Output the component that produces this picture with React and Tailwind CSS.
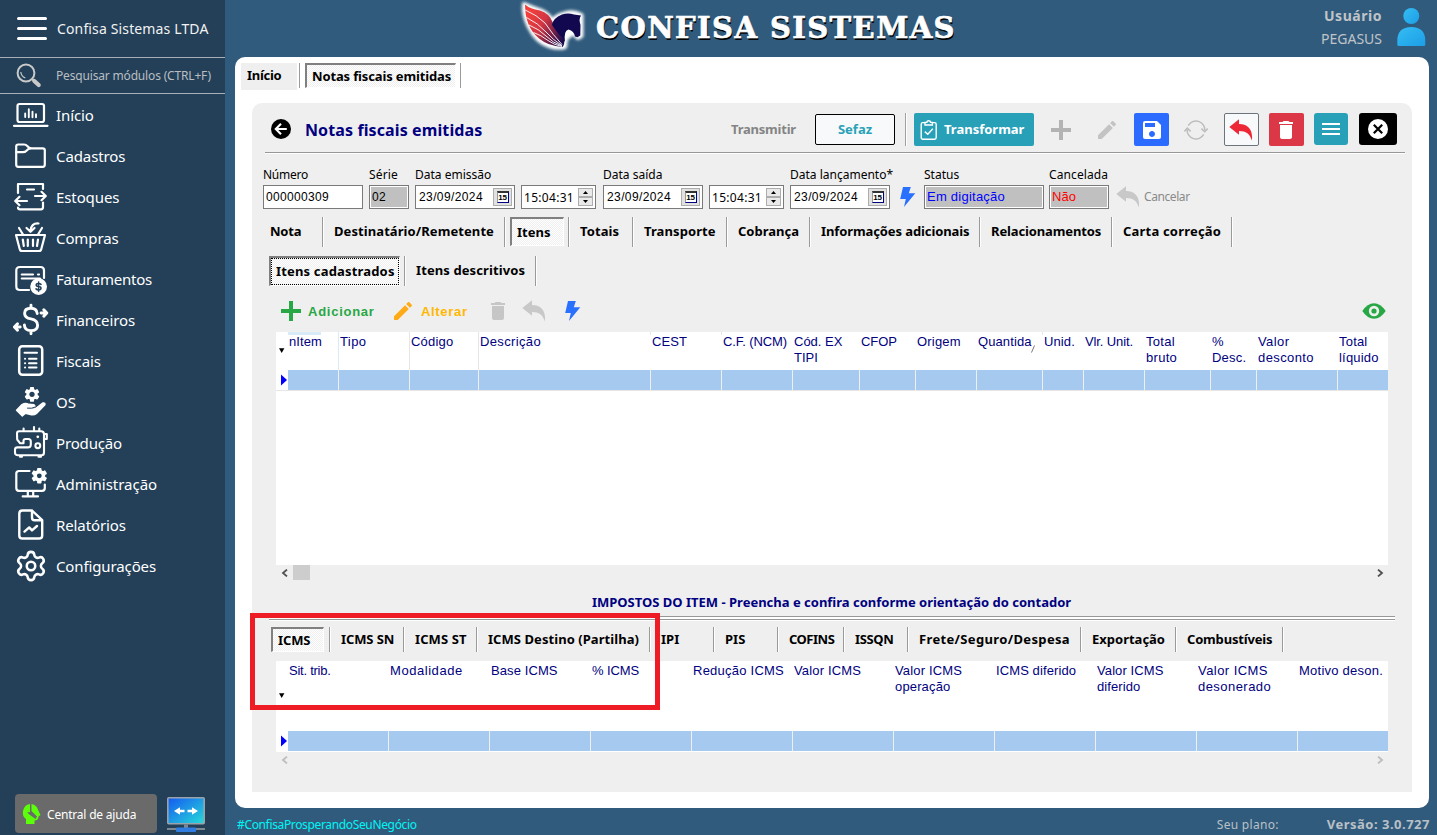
import React from "react";
import { Settings } from "lucide-react";
import { MdDelete, MdSave, MdEdit } from "react-icons/md";

const noto = "font-['Noto_Sans','Open_Sans',sans-serif]";
const arial = "font-['Liberation_Sans',Arial,sans-serif]";

/* ---------- sidebar icons ---------- */

function Icon({ children, w = 2.2 }) {
  return (
    <svg width="36" height="36" viewBox="0 0 36 36" fill="none" stroke="#fff" strokeWidth={w} strokeLinecap="round" strokeLinejoin="round">
      {children}
    </svg>
  );
}

function Cog({ cx, cy, r, hole }) {
  return (
    <g transform={`translate(${cx} ${cy})`} stroke="none" fill="#fff">
      {[0, 60, 120].map((a) => (
        <rect key={a} x={-r * 0.28} y={-r} width={r * 0.56} height={r * 2} rx="0.8" transform={`rotate(${a})`} />
      ))}
      <circle r={r * 0.76} />
      <circle r={hole} fill="#234058" />
    </g>
  );
}

const icons = {
  inicio: (
    <Icon>
      <rect x="4.5" y="7" width="26.5" height="18" rx="2" />
      <path d="M1 28.8H34.5" />
      <path d="M12.2 16.5V20M15.8 12.3V20.3M19.5 14.8V20.3M23 17.3V20.3" strokeWidth="1.9" />
    </Icon>
  ),
  cadastros: (
    <Icon>
      <path d="M3.2 8.5Q3.2 6.5 5.2 6.5H11Q13 6.5 14.5 8.2Q16 10 18 10.3H29.7Q31.8 10.3 31.8 12.3V26.5Q31.8 28.8 29.7 28.8H5.2Q3.2 28.8 3.2 26.5Z" />
      <path d="M3.5 14.2H10Q12 14.2 13.4 12.7Q15.5 10.3 17.5 10.3" />
    </Icon>
  ),
  estoques: (
    <Icon>
      <path d="M5 14V5H30V10M30 23.5V28Q30 30.3 28 30.3H7Q5 30.3 5 28.5" />
      <path d="M14 10.5H21" />
      <path d="M22 17H32.5M28.5 12.8L32.8 17L28.5 21.2M14 22H2.5M6.5 17.8L2.2 22L6.5 26.2" />
    </Icon>
  ),
  compras: (
    <Icon>
      <path d="M3 15H32L28.3 29Q27.9 31 26 31H9Q7.1 31 6.7 29Z" />
      <path d="M6 8L10 14.5M29 8L25 14.5M25.5 3.5Q18 3 17.5 11M13.5 8L17.5 11.8L21.5 8" />
      <path d="M9.8 19.5L10.8 26M14.8 19.5V26M20 19.5V26M25 19.5L24 26" />
    </Icon>
  ),
  faturamentos: (
    <Icon>
      <path d="M16 29H7Q3.3 29 3.3 25.5V9.5Q3.3 6 7 6H27.5Q31 6 31 9.5V17" />
      <path d="M8.8 13.5H20M25 13.5H26M8.8 17.5H27" />
      <circle cx="25.6" cy="25.6" r="7.3" fill="#fff" />
      <path d="M28 23.4Q27 22.4 25.5 22.4Q23.2 22.4 23.2 24Q23.2 25.4 25.6 25.6Q28 25.9 28 27.3Q28 28.9 25.6 28.9Q24 28.9 23 27.9M25.6 21V30.2" stroke="#234058" strokeWidth="1.5" />
    </Icon>
  ),
  financeiros: (
    <Icon w={2.9}>
      <path d="M24.2 11.5Q23.8 6.2 18 6.2Q11.6 6.2 11.6 11.2Q11.6 15.8 18 16.9Q24.6 18.2 24.6 23.2Q24.6 28.6 18 28.6Q11.6 28.6 11.4 23M18 3.3V6M18 29V31.7" />
      <path d="M28 11H33.5M30.8 7.8L33.8 11L30.8 14.2M7.2 25H1.7M4.5 21.8L1.4 25L4.5 28.2" />
    </Icon>
  ),
  fiscais: (
    <Icon>
      <rect x="6.2" y="3.3" width="23" height="28.5" rx="3.2" strokeWidth="2.5" />
      <path d="M11.5 9.8H24M16 15.8H23.5M16 20.2H23.5M16 24.6H23.5M12 15.8H12.1M12 20.2H12.1M12 24.6H12.1" strokeWidth="2" />
    </Icon>
  ),
  os: (
    <Icon>
      <Cog cx={19} cy={10.3} r={7.4} hole={2.6} />
      <path d="M3.5 26.3L9 20.6Q12.5 18.6 15.5 20.3L21 20.7Q22.8 22 21 23.4L15.5 24.2Q19.5 26.2 23.5 23.8L30 18.9Q32.5 18.6 31.9 20.8L23.5 29.4Q21.5 31 18.5 30.7L12.5 29.3L9.3 31.9Z" fill="#fff" strokeWidth="1.4" />
      <path d="M14.5 24.2Q19 24.8 22 23.2" stroke="#234058" strokeWidth="1" />
    </Icon>
  ),
  producao: (
    <Icon w={2.1}>
      <path d="M4 8.5Q4 6.3 6.2 6.3H28Q31 6.3 31 9.3V27.5Q31 30.3 28.5 30.3H5Q2 30.3 2 27.5V24.8Q2 22.4 4.6 22.4H15Q17.8 22.4 17.8 19.5V16.5Q17.8 14 15.3 14H12.5Q10.5 14 10.5 16V18.3L7.2 18.3L4.2 14.5Z" />
      <path d="M10.6 3.5V6M21 2V6M26.3 3.5V6M31.5 9H33.8V14H31.5M7 31.8H9M25.5 31.8H28" />
      <circle cx="24.8" cy="20.7" r="2.4" />
      <circle cx="24.8" cy="11.8" r="1.4" fill="#fff" stroke="none" />
    </Icon>
  ),
  administracao: (
    <Icon>
      <path d="M16.5 5H6Q3.3 5 3.3 7.6V22Q3.3 24.8 6 24.8H29Q31.8 24.8 31.8 22V18.5M14.8 25V30M20.2 25V30M9.7 30.4H25" />
      <Cog cx={26.3} cy={9.8} r={7.8} hole={2.4} />
    </Icon>
  ),
  relatorios: (
    <Icon w={2.4}>
      <path d="M19 3.5H9.5Q6.3 3.5 6.3 6.6V28.4Q6.3 31.5 9.5 31.5H26Q29.2 31.5 29.2 28.4V13.2L19 3.5V10.5Q19 13.2 21.6 13.2H29" />
      <path d="M11.5 24.6L16.2 20.4L19 23.4L24 19" />
    </Icon>
  ),
  configuracoes: <Settings size={34} color="#fff" strokeWidth={1.8} />,
};

const menu = [
  ["Início", "inicio", "tracking-[-0.1px]"],
  ["Cadastros", "cadastros", "tracking-[-0.1px]"],
  ["Estoques", "estoques", "tracking-[-0.1px]"],
  ["Compras", "compras", "tracking-[-0.1px]"],
  ["Faturamentos", "faturamentos", "tracking-[-0.22px]"],
  ["Financeiros", "financeiros", "tracking-[-0.12px]"],
  ["Fiscais", "fiscais", "tracking-[-0.1px]"],
  ["OS", "os", "tracking-[0px]"],
  ["Produção", "producao", "tracking-[-0.15px]"],
  ["Administração", "administracao", "tracking-[-0.03px]"],
  ["Relatórios", "relatorios", "tracking-[-0.1px]"],
  ["Configurações", "configuracoes", "tracking-[-0.12px]"],
];

function Sidebar() {
  return (
    <aside className="flex h-full w-[225px] shrink-0 flex-col bg-[#234058] text-white">
      <div className="flex h-[58px] items-center border-b border-[#a7b0b8] pl-[17px]">
        <div className="flex w-[30px] flex-col gap-[7px]">
          <span className="h-[3px] rounded-full bg-white" />
          <span className="h-[3px] rounded-full bg-white" />
          <span className="h-[3px] rounded-full bg-white" />
        </div>
        <span className="ml-[10px] text-[14px] tracking-[0.14px] text-[#f2f2f2]">Confisa Sistemas LTDA</span>
      </div>
      <div className="flex h-[36px] items-center border-b border-[#a7b0b8] pl-[16px]">
        <svg width="26" height="26" viewBox="0 0 26 26" fill="none" stroke="#c9c9c9">
          <circle cx="10" cy="10" r="8.4" strokeWidth="2" />
          <path d="M4.8 9Q5.3 13.4 9.3 15" strokeWidth="1.2" />
          <path d="M18.3 18L22.7 22" strokeWidth="4.2" strokeLinecap="round" />
          <path d="M15.8 15.8L18 18" strokeWidth="1.8" />
        </svg>
        <span className="ml-[14px] text-[12px] tracking-[-0.17px] text-[#b9bec2]">Pesquisar módulos (CTRL+F)</span>
      </div>
      <nav className="flex flex-col">
        {menu.map(([label, icon, track]) => (
          <div key={label} className="flex h-[41px] items-center pl-[13px]">
            <span className="flex w-[36px] justify-center">{icons[icon]}</span>
            <span className={`ml-[7px] pt-px text-[15px] ${track}`}>{label}</span>
          </div>
        ))}
      </nav>
      <div className="mt-auto mb-[2px] flex items-center pl-[15px]">
        <div className="flex h-[39px] w-[142px] items-center rounded-[4px] bg-[#6a6a6a] pl-[7px]">
          <svg width="20" height="22" viewBox="0 0 20 22">
            <path d="M4 21V16Q0 13 1 8Q2 2 8 1V9L5 9.5L8 12L13.5 16L15 13.5L9.5 8V1Q15 2 16.5 8L18.5 12L16.5 13.5Q16.5 17.5 12.5 17.5V21Z" fill="#5bff0a" />
          </svg>
          <span className="ml-[5px] pt-[2px] text-[12px] tracking-[-0.2px]">Central de ajuda</span>
        </div>
        <svg className="ml-[10px]" width="38" height="36" viewBox="0 0 38 36">
          <defs>
            <linearGradient id="scr" x1="0" y1="0" x2="1" y2="1">
              <stop offset="0" stopColor="#1559f0" />
              <stop offset="1" stopColor="#27dcd9" />
            </linearGradient>
          </defs>
          <rect x="0.8" y="1.8" width="36.4" height="26" rx="1" fill="url(#scr)" stroke="#9aa3ab" strokeWidth="1.6" />
          <path d="M17 28.5H21V32H38V34H0V32H17Z" fill="#7d8790" />
          <rect x="9" y="31.5" width="20" height="4.5" rx="1" fill="#2f7de0" />
          <path d="M7 15L13 11.2V13.7H17.5V16.3H13V18.8ZM31 15L25 11.2V13.7H20.5V16.3H25V18.8Z" fill="#fff" />
        </svg>
      </div>
    </aside>
  );
}

/* ---------- top bar ---------- */

function Logo() {
  return (
    <svg width="72" height="54" viewBox="0 0 72 54" className="shrink-0 overflow-visible">
      <defs>
        <linearGradient id="wing" x1="0.1" y1="0.2" x2="1" y2="0.8">
          <stop offset="0" stopColor="#f23f3c" />
          <stop offset="0.4" stopColor="#d23643" />
          <stop offset="1" stopColor="#1c0b4c" />
        </linearGradient>
        <filter id="halo" x="-20%" y="-20%" width="140%" height="140%">
          <feGaussianBlur stdDeviation="1.4" />
        </filter>
      </defs>
      <path d="M12 4Q11 15 17 27Q24 42 37 46Q46 49 53 47L54 39L61 33L66 38L69.5 36V15Q60 10 51 14Q44 16 40 21Q37 14 30 11Q19 7 12 4Z" fill="#fff" stroke="#fff" strokeWidth="4" strokeLinejoin="round" filter="url(#halo)" />
      <path d="M13 4.5Q18 9 28 10.5Q37 13 40.5 22Q45 33 52 40Q53 44 50.5 47Q36 46 27 38.5Q13 27 13 4.5Z" fill="url(#wing)" />
      <path d="M13.2 10Q25 15 33 23Q41 35 50 44.5M14.5 17.5Q26 23 34 32Q41 40 50 45.5M17 25Q27 29 34 36Q41 43 50 46M21.5 32.5Q29 35 36 40.5Q42 45 50 46.5" fill="none" stroke="#fff" strokeWidth="0.9" />
      <path d="M40 25Q41 18 50 14.5Q56 12.5 62 14.5L69 15.5Q66.5 19 68.5 25L68.3 35.5L65.5 37.3L63 36.5Q62 31 56.5 29.5Q51.5 30.5 53 42Q46 34 40 25Z" fill="#110850" />
    </svg>
  );
}

function TopBar() {
  return (
    <header className="flex h-[57px] shrink-0 items-start pl-[287px]">
      <Logo />
      <h1 className="ml-[12px] w-[379px] pt-[8px] font-['DejaVu_Serif',serif] text-[29px] leading-[40px] font-bold tracking-[1.42px] whitespace-nowrap text-white [-webkit-text-stroke:0.7px_#fff] [text-shadow:1px_2px_0_#000]">
        CONFISA SISTEMAS
      </h1>
      <div className="ml-auto flex pr-[11px]">
        <div className="flex flex-col items-end pt-[4px] text-[14px] leading-[23px] text-[#c0c4c8]">
          <span className="font-bold tracking-[0.53px]">Usuário</span>
          <span>PEGASUS</span>
        </div>
        <svg className="mt-[8px] ml-[15px]" width="29" height="38" viewBox="0 0 29 38">
          <defs>
            <linearGradient id="usr" x1="0" y1="0" x2="1" y2="1">
              <stop offset="0" stopColor="#35bdf3" />
              <stop offset="1" stopColor="#1c9ee6" />
            </linearGradient>
          </defs>
          <circle cx="14.3" cy="8" r="8" fill="url(#usr)" />
          <path d="M0.3 36.5V33Q0.3 19 14.3 19Q28.3 19 28.3 33V36.5Q28.3 38 26.8 38H1.8Q0.3 38 0.3 36.5Z" fill="url(#usr)" />
        </svg>
      </div>
    </header>
  );
}

/* ---------- shared pieces ---------- */

function ActiveTab({ className, focus, children }) {
  return (
    <div className={`border-t-2 border-l-2 border-t-[#808080] border-l-[#808080] border-r border-b border-r-white border-b-white bg-[repeating-conic-gradient(#ffffff_0_25%,#efefef_0_50%)] bg-[length:2px_2px] ${className}`}>
      <div className={`flex h-full items-center whitespace-nowrap text-[13px] font-bold ${focus ? "border border-dotted border-black pl-[4px]" : "pt-px pl-[5px]"}`}>{children}</div>
    </div>
  );
}

function Tab({ className, children }) {
  return <div className={`flex items-center border-r border-[#9a9a9a] whitespace-nowrap text-[13px] font-bold shadow-[1px_0_0_#fff] ${className}`}>{children}</div>;
}

function Bolt() {
  return (
    <svg width="16" height="20" viewBox="0 0 16 20">
      <path d="M3 0H10.8L8.8 6.2H15.3L4 20L5.8 12H0.2Z" fill="#2a70ff" />
    </svg>
  );
}

function Undo({ color }) {
  return (
    <svg width="24" height="22" viewBox="0 0 24 22">
      <path d="M0.3 8L10 0.3V5C18 4.8 24.5 10 22.8 21.5C21 14.8 17 12 10 12V15.8Z" fill={color} />
    </svg>
  );
}

function Plus({ color }) {
  return (
    <svg width="20" height="20" viewBox="0 0 20 20">
      <path d="M8 0H12V8H20V12H12V20H8V12H0V8H8Z" fill={color} />
    </svg>
  );
}

/* ---------- record header ---------- */

function RecordHeader() {
  return (
    <div className="mr-[7px] ml-[13px] flex h-[50px] items-center border-b border-[#979797] pt-[4px] pl-[6px] shadow-[0_1px_0_#fff]">
      <svg className="mb-px" width="20" height="20" viewBox="0 0 20 20">
        <circle cx="10" cy="10" r="10" fill="#000" />
        <path d="M15.8 10H5.5M10 4.8L4.8 10L10 15.2" fill="none" stroke="#fff" strokeWidth="2.1" />
      </svg>
      <h2 className="ml-[14px] w-[426px] text-[16px] font-bold tracking-[0.11px] text-[#000080]">Notas fiscais emitidas</h2>
      <span className="w-[84px] pt-px text-[13px] font-bold tracking-[-0.21px] text-[#848484]">Transmitir</span>
      <button className="flex h-[31px] w-[80px] items-center justify-center rounded-[2px] border border-black bg-[#f8f9fa] text-[13px] font-bold text-[#28a2b8]">Sefaz</button>
      <span className="ml-[10px] h-[33px] w-px bg-[#a0a0a0] shadow-[1px_0_0_#fff]" />
      <button className="ml-[8px] flex h-[33px] w-[120px] items-center rounded-[2px] bg-[#28a0b8] pl-[6px] text-[13px] font-bold text-white">
        <svg width="18" height="20" viewBox="0 0 18 20" fill="none" stroke="#fff" strokeWidth="1.4">
          <rect x="1.2" y="2.6" width="15" height="16.6" rx="1.6" />
          <path d="M5 5V2.4H6.8Q7 0.8 8.7 0.8T10.6 2.4H12.4V5Z" fill="#28a0b8" />
          <path d="M4.8 11.6L7.8 14.2L12.8 8.8" />
        </svg>
        <span className="ml-[6px]">Transformar</span>
      </button>
      <span className="ml-[17px]"><Plus color="#b3b3b3" /></span>
      <MdEdit className="ml-[24px] shrink-0" size={24} color="#c3c3c3" />
      <button className="ml-[15px] flex h-[33px] w-[35px] items-center justify-center rounded-[2px] bg-[#2b6bff]"><MdSave size={24} color="#fff" /></button>
      <svg className="ml-[15px]" width="24" height="20" viewBox="0 0 24 20" fill="none" stroke="#bcbcbc" strokeWidth="1.5">
        <path d="M4.3 5.6A8.8 8.8 0 0 1 20.8 10.5M19.7 14.4A8.8 8.8 0 0 1 3.2 9.5" />
        <path d="M17.4 8.6L20.7 11.8L23.7 8.6M0.4 11.4L3.3 8.2L6.6 11.4" />
      </svg>
      <button className="ml-[16px] flex h-[33px] w-[35px] items-center rounded-[2px] border border-[#6c757d] bg-[#f8f9fa] pl-[4px]"><Undo color="#ee2737" /></button>
      <button className="ml-[10px] flex h-[33px] w-[35px] items-center rounded-[2px] bg-[#dc3747] pl-[5px]"><MdDelete size={24} color="#fff" /></button>
      <button className="mb-[1px] ml-[10px] flex h-[32px] w-[34px] flex-col items-center justify-center gap-[3px] rounded-[3px] bg-[#28a0b8]">
        <span className="h-[2px] w-[18px] bg-white" />
        <span className="h-[2px] w-[18px] bg-white" />
        <span className="h-[2px] w-[18px] bg-white" />
      </button>
      <button className="mb-[1px] ml-[11px] flex h-[32px] w-[38px] items-center justify-center rounded-[3px] bg-black">
        <svg width="20" height="20" viewBox="0 0 20 20">
          <circle cx="10" cy="10" r="10" fill="#fff" />
          <path d="M5.8 5.8L14.2 14.2M14.2 5.8L5.8 14.2" stroke="#000" strokeWidth="2.2" />
        </svg>
      </button>
    </div>
  );
}

/* ---------- fields ---------- */

function Field({ label, className, children }) {
  return (
    <div className={`flex flex-col ${className}`}>
      <label className="h-[21px] whitespace-nowrap text-[12px] leading-[21px]">{label}</label>
      {children}
    </div>
  );
}

function DateBox() {
  return (
    <div className={`flex h-[24px] w-[100px] items-center justify-between border border-[#7a7a7a] bg-white pr-[2px] pl-[3px] text-[12px] tracking-[0.39px] ${arial}`}>
      23/09/2024
      <span className="flex h-[18px] w-[19px] items-center justify-center border border-[#adadad] bg-[#e1e1e1]">
        <span className="flex h-[12px] w-[12px] items-center justify-center border-t-2 border-r border-b border-l border-t-[#333] border-r-[#000080] border-b-[#000080] border-l-[#999] bg-white text-[8px] leading-none font-bold tracking-[-0.2px]">15</span>
      </span>
    </div>
  );
}

function TimeBox() {
  return (
    <div className="mt-[21px] flex h-[24px] w-[75px] items-center justify-between border border-[#7a7a7a] bg-white pr-[2px] pl-[2px] text-[12px] tracking-[0.3px]">
      <span className="pt-px">15:04:31</span>
      <span className="flex h-[18px] w-[15px] flex-col">
        <span className="flex h-[9px] items-center justify-center border border-[#adadad] bg-[#e9e9e9]">
          <svg width="5" height="3" viewBox="0 0 5 3"><path d="M2.5 0L5 3H0Z" /></svg>
        </span>
        <span className="flex h-[9px] items-center justify-center border border-[#adadad] bg-[#e9e9e9]">
          <svg width="5" height="3" viewBox="0 0 5 3"><path d="M0 0H5L2.5 3Z" /></svg>
        </span>
      </span>
    </div>
  );
}

function ReadOnly({ className, children }) {
  return <div className={`h-[24px] border border-[#7a7a7a] bg-white p-px ${arial}`}><div className={`flex h-full items-center bg-[#c0c0c0] pl-px ${className}`}>{children}</div></div>;
}

function Fields() {
  return (
    <div className="mt-[11px] flex pl-[11px]">
      <Field label={<span className="tracking-[-0.25px]">Número</span>} className="w-[100px]">
        <div className={`flex h-[24px] items-center border border-[#7a7a7a] bg-white pb-px pl-[2px] text-[12px] tracking-[0.32px] ${arial}`}>000000309</div>
      </Field>
      <Field label={<span className="tracking-[0.15px]">Série</span>} className="ml-[6px] w-[40px]">
        <ReadOnly className="pb-px text-[12px] tracking-[0.3px]">02</ReadOnly>
      </Field>
      <Field label="Data emissão" className="ml-[6px] w-[100px]"><DateBox /></Field>
      <div className="ml-[6px]"><TimeBox /></div>
      <Field label="Data saída" className="ml-[7px] w-[100px]"><DateBox /></Field>
      <div className="ml-[6px]"><TimeBox /></div>
      <Field label="Data lançamento*" className="ml-[6px] w-[100px]"><DateBox /></Field>
      <div className="mt-[23px] ml-[10px]"><Bolt /></div>
      <Field label="Status" className="ml-[8px] w-[120px]">
        <ReadOnly className="pb-px text-[13px] tracking-[0.24px] text-[#0000ff]">Em digitação</ReadOnly>
      </Field>
      <Field label={<span className="tracking-[0.1px]">Cancelada</span>} className="ml-[5px] w-[60px]">
        <ReadOnly className="pb-px text-[13px] tracking-[0.1px] text-[#ff0000]">Não</ReadOnly>
      </Field>
      <div className="mt-[21px] ml-[7px] flex h-[24px] items-center">
        <Undo color="#c8c8c8" />
        <span className="ml-[4px] text-[12px] tracking-[-0.42px] text-[#8a8a8a]">Cancelar</span>
      </div>
    </div>
  );
}

/* ---------- grids ---------- */

const itemColumns = [
  { w: "w-[51px]", t: "nItem", tr: "tracking-[0.1px]", line: "border-[#d8ebf8] h-[38px]" },
  { w: "w-[71px]", t: "Tipo", tr: "tracking-[0.4px]", line: "border-[#e6e6e6] h-[38px]" },
  { w: "w-[69px]", t: "Código", tr: "tracking-[0.2px]", line: "border-[#e6e6e6] h-[38px]" },
  { w: "w-[172px]", t: "Descrição", tr: "tracking-[0.36px]", line: "border-[#e6e6e6] h-[3px]" },
  { w: "w-[71px]", t: "CEST", tr: "tracking-[0.1px]", line: "border-[#e6e6e6] h-[3px]" },
  { w: "w-[71px]", t: "C.F. (NCM)", tr: "tracking-[-0.1px]", line: "border-transparent" },
  { w: "w-[67px]", t: "Cód. EX\nTIPI", tr: "tracking-[0px]", line: "border-transparent" },
  { w: "w-[56px]", t: "CFOP", tr: "tracking-[-0.1px]", line: "border-transparent" },
  { w: "w-[61px]", t: "Origem", tr: "tracking-[0.2px]", line: "border-transparent" },
  { w: "w-[66px]", t: "Quantida", tr: "tracking-[0.1px]", line: "border-[#e6e6e6] h-[3px]", cut: true },
  { w: "w-[41px]", t: "Unid.", tr: "tracking-[0.1px]", line: "border-transparent" },
  { w: "w-[61px]", t: "Vlr. Unit.", tr: "tracking-[-0.11px]", line: "border-transparent" },
  { w: "w-[66px]", t: "Total\nbruto", tr: "tracking-[0.3px]", line: "border-transparent" },
  { w: "w-[46px]", t: "%\nDesc.", tr: "tracking-[0.2px]", line: "border-transparent" },
  { w: "w-[81px]", t: "Valor\ndesconto", tr: "tracking-[0.4px]", line: "border-transparent" },
  { w: "w-[50px]", t: "Total\nlíquido", tr: "tracking-[0.2px]", line: "border-transparent" },
];

const taxColumns = [
  ["Sit. trib.", "tracking-[-0.25px]"],
  ["Modalidade", "tracking-[0.55px]"],
  ["Base ICMS", "tracking-[0.1px]"],
  ["% ICMS", "tracking-[-0.1px]"],
  ["Redução ICMS", "tracking-[0.24px]"],
  ["Valor ICMS", "tracking-[0.15px]"],
  ["Valor ICMS\noperação", "tracking-[0.15px]"],
  ["ICMS diferido", "tracking-[0.1px]"],
  ["Valor ICMS\ndiferido", "tracking-[0.1px]"],
  ["Valor ICMS\ndesonerado", "tracking-[0.45px]"],
  ["Motivo deson.", "tracking-[0.24px]"],
];

function RowMarker() {
  return (
    <div className="flex w-[12px] shrink-0 items-center justify-end bg-white">
      <svg width="7" height="12" viewBox="0 0 7 12"><path d="M0 0.5L6 6L0 11.5Z" fill="#0000ff" /></svg>
    </div>
  );
}

function ScrollArrow({ dir, color }) {
  return (
    <svg width="7" height="8" viewBox="0 0 7 8" fill="none" stroke={color} strokeWidth="1.8">
      <path d={dir === "left" ? "M6 0.6L2 4L6 7.4" : "M1 0.6L5 4L1 7.4"} />
    </svg>
  );
}

function DownMark() {
  return <svg width="6" height="5" viewBox="0 0 6 5"><path d="M0 0.3H5.4L2.7 5Z" /></svg>;
}

function ItemsGrid() {
  return (
    <div className="mr-[24px] ml-[24px]">
      <div className={`flex h-[233px] flex-col bg-white text-[13px] leading-[16px] text-[#000080] ${arial}`}>
        <div className="flex h-[38px]">
          <div className="w-[12px] pt-[16px] pl-[3px]"><DownMark /></div>
          {itemColumns.map((c, i) => (
            <div key={c.t + i} className={`flex h-[38px] ${c.w}`}>
              <div className="min-w-0 flex-1">
                <div className={i === 0 ? "-mb-px h-[3px] w-[33px] bg-[#d8ebf8]" : "-mb-px h-[3px]"} />
                <div className={`-ml-px flex pl-[2px] whitespace-pre ${c.tr}`}>
                  {c.t}
                  {c.cut && <svg className="mt-[11px] -ml-px shrink-0" width="4" height="8" viewBox="0 0 4 8"><path d="M3.5 0.5L0.5 7.5" stroke="#777" /></svg>}
                </div>
              </div>
              <span className={`border-r ${c.line}`} />
            </div>
          ))}
        </div>
        <div className="flex h-[20px] bg-[#a6c9ef]">
          <RowMarker />
          {itemColumns.map((c, i) => (
            <div key={i} className={`border-r ${c.w} ${i === 15 ? "border-transparent" : "border-[#efefef]"}`} />
          ))}
        </div>
        <div className="h-px bg-[#e6e6e6]" />
      </div>
      <div className="flex h-[17px] items-start justify-between pr-[4px] pl-[5px]">
        <div className="flex items-start">
          <span className="pt-[4px]"><ScrollArrow dir="left" color="#505050" /></span>
          <span className="ml-[5px] h-[15px] w-[17px] bg-[#cdcdcd]" />
        </div>
        <span className="pt-[4px]"><ScrollArrow dir="right" color="#505050" /></span>
      </div>
    </div>
  );
}

function TaxGrid() {
  return (
    <div className="mt-[9px] mr-[24px] ml-[24px]">
      <div className={`flex flex-col overflow-hidden bg-white text-[13px] leading-[16px] text-[#000080] ${arial}`}>
        <div className="flex h-[70px]">
          <div className="w-[11px] shrink-0 pt-[32px] pl-[3px]"><DownMark /></div>
          {taxColumns.map(([t, tr]) => (
            <div key={t} className={`w-[101px] shrink-0 pt-[2px] pl-[2px] whitespace-pre ${tr}`}>{t}</div>
          ))}
        </div>
        <div className="flex h-[20px] overflow-hidden bg-[#a6c9ef]">
          <RowMarker />
          {taxColumns.map(([t]) => (
            <div key={t} className="w-[101px] shrink-0 border-r border-[#efefef]" />
          ))}
        </div>
        <div className="h-px" />
      </div>
      <div className="flex h-[17px] items-start justify-between pt-[4px] pr-[4px] pl-[5px]">
        <ScrollArrow dir="left" color="#bdbdbd" />
        <ScrollArrow dir="right" color="#bdbdbd" />
      </div>
    </div>
  );
}

/* ---------- page ---------- */

function Panel() {
  return (
    <section className="ml-[17px] h-[689px] w-[1160px] rounded-t-[10px] bg-[#efefef]">
      <RecordHeader />
      <Fields />

      <div className="mt-[8px] flex h-[30px] pl-[11px]">
        <Tab className="w-[60px] pl-[7px] tracking-[-0.2px]">Nota</Tab>
        <Tab className="w-[182px] pl-[11px] tracking-[0.08px]">Destinatário/Remetente</Tab>
        <div className="flex w-[64px] border-r border-[#9a9a9a] pl-[5px] shadow-[1px_0_0_#fff]">
          <ActiveTab className="mb-px w-[54px]">Itens</ActiveTab>
        </div>
        <Tab className="w-[64px] pl-[11px] tracking-[0.1px]">Totais</Tab>
        <Tab className="w-[94px] pl-[11px] tracking-[0.1px]">Transporte</Tab>
        <Tab className="w-[83px] pl-[11px]">Cobrança</Tab>
        <Tab className="w-[170px] pl-[11px] tracking-[-0.1px]">Informações adicionais</Tab>
        <Tab className="w-[132px] pl-[11px] tracking-[-0.13px]">Relacionamentos</Tab>
        <Tab className="w-[120px] pl-[11px] tracking-[0.2px]">Carta correção</Tab>
      </div>

      <div className="mt-[9px] flex h-[30px] pl-[17px]">
        <div className="flex w-[136px] border-r border-[#9a9a9a] shadow-[1px_0_0_#fff]">
          <ActiveTab focus className="w-[131px]"><span className="tracking-[0.17px]">Itens cadastrados</span></ActiveTab>
        </div>
        <Tab className="w-[131px] pl-[11px] tracking-[0.1px]">Itens descritivos</Tab>
      </div>

      <div className={`flex h-[46px] items-center pt-[4px] pr-[26px] pl-[29px] text-[13px] font-bold ${arial}`}>
        <Plus color="#28a745" />
        <span className="ml-[7px] w-[83px] pt-px tracking-[0.74px] text-[#28a745]">Adicionar</span>
        <MdEdit size={24} color="#ffab17" />
        <span className="ml-[6px] w-[65px] pt-px tracking-[0.68px] text-[#ffb800]">Alterar</span>
        <MdDelete size={24} color="#c6c6c6" />
        <span className="ml-[12px]"><Undo color="#c8c8c8" /></span>
        <span className="ml-[19px]"><Bolt /></span>
        <svg className="ml-auto" width="24" height="16" viewBox="0 0 24 16">
          <path d="M0.3 8Q5.5 0.2 12 0.2T23.7 8Q18.5 15.8 12 15.8T0.3 8Z" fill="#28a745" />
          <circle cx="12" cy="8" r="5.2" fill="#efefef" />
          <circle cx="12" cy="8" r="2.6" fill="#28a745" />
        </svg>
      </div>

      <ItemsGrid />

      <div className="flex h-[34px] items-center justify-center pt-[8px] pr-px text-[13px] font-bold text-[#000080]">
        <span>IMPOSTOS DO ITEM - Preencha e confira conforme orientação do contador</span>
      </div>
      <div className="mr-[17px] ml-[17px] h-[5px] border-t border-[#979797] bg-white">
        <div className="mt-[2px] border-t border-[#979797]" />
      </div>

      <div className="mt-[6px] flex h-[25px] pl-[19px]">
        <div className="flex w-[59px] border-r border-[#9a9a9a] shadow-[1px_0_0_#fff]">
          <ActiveTab className="w-[53px]"><span className="tracking-[-0.1px]">ICMS</span></ActiveTab>
        </div>
        <Tab className="w-[74px] pl-[11px] tracking-[-0.1px]">ICMS SN</Tab>
        <Tab className="w-[73px] pl-[11px] tracking-[0.1px]">ICMS ST</Tab>
        <Tab className="w-[173px] pl-[11px] tracking-[0.06px]">ICMS Destino (Partilha)</Tab>
        <Tab className="w-[64px] pl-[11px]">IPI</Tab>
        <Tab className="w-[64px] pl-[11px]">PIS</Tab>
        <Tab className="w-[66px] pl-[11px] tracking-[-0.5px]">COFINS</Tab>
        <Tab className="w-[64px] pl-[11px] tracking-[-0.35px]">ISSQN</Tab>
        <Tab className="w-[173px] pl-[11px] tracking-[0.35px]">Frete/Seguro/Despesa</Tab>
        <Tab className="w-[95px] pl-[11px]">Exportação</Tab>
        <Tab className="w-[107px] pl-[11px] tracking-[-0.18px]">Combustíveis</Tab>
      </div>

      <TaxGrid />
    </section>
  );
}

export default function App() {
  return (
    <div className={`relative flex h-[835px] w-[1437px] overflow-hidden bg-[#305b7d] text-black ${noto}`}>
      <Sidebar />
      <div className="flex min-w-0 flex-1 flex-col">
        <TopBar />
        <main className="ml-[10px] h-[751px] w-[1194px] shrink-0 rounded-[10px] bg-white pt-[6px]">
          <div className="flex h-[40px] items-start pl-[6px]">
            <div className="flex h-[27px] w-[56px] items-center bg-[#efefef] pb-[2px] pl-[6px] text-[13px] font-bold tracking-[-0.3px]">Início</div>
            <span className="ml-[2px] h-[25px] w-px bg-[#9a9a9a]" />
            <ActiveTab className="ml-[5px] h-[25px] w-[151px]"><span className="tracking-[-0.14px]">Notas fiscais emitidas</span></ActiveTab>
            <span className="ml-[4px] h-[25px] w-px bg-[#9a9a9a]" />
          </div>
          <Panel />
        </main>
        <footer className="flex flex-1 items-center pt-[6px] pr-[7px] pl-[12px] text-[12px] text-[#b9c0c6]">
          <span className="tracking-[-0.35px] text-[#00f5f5]">#ConfisaProsperandoSeuNegócio</span>
          <span className="ml-auto w-[110px] tracking-[0.3px]">Seu plano:</span>
          <span className="text-[13px] font-bold tracking-[0.5px]">Versão: 3.0.727</span>
        </footer>
      </div>
      <div className="absolute top-[613px] left-[250px] h-[97px] w-[410px] border-[5px] border-[#ee1c25]" />
    </div>
  );
}
